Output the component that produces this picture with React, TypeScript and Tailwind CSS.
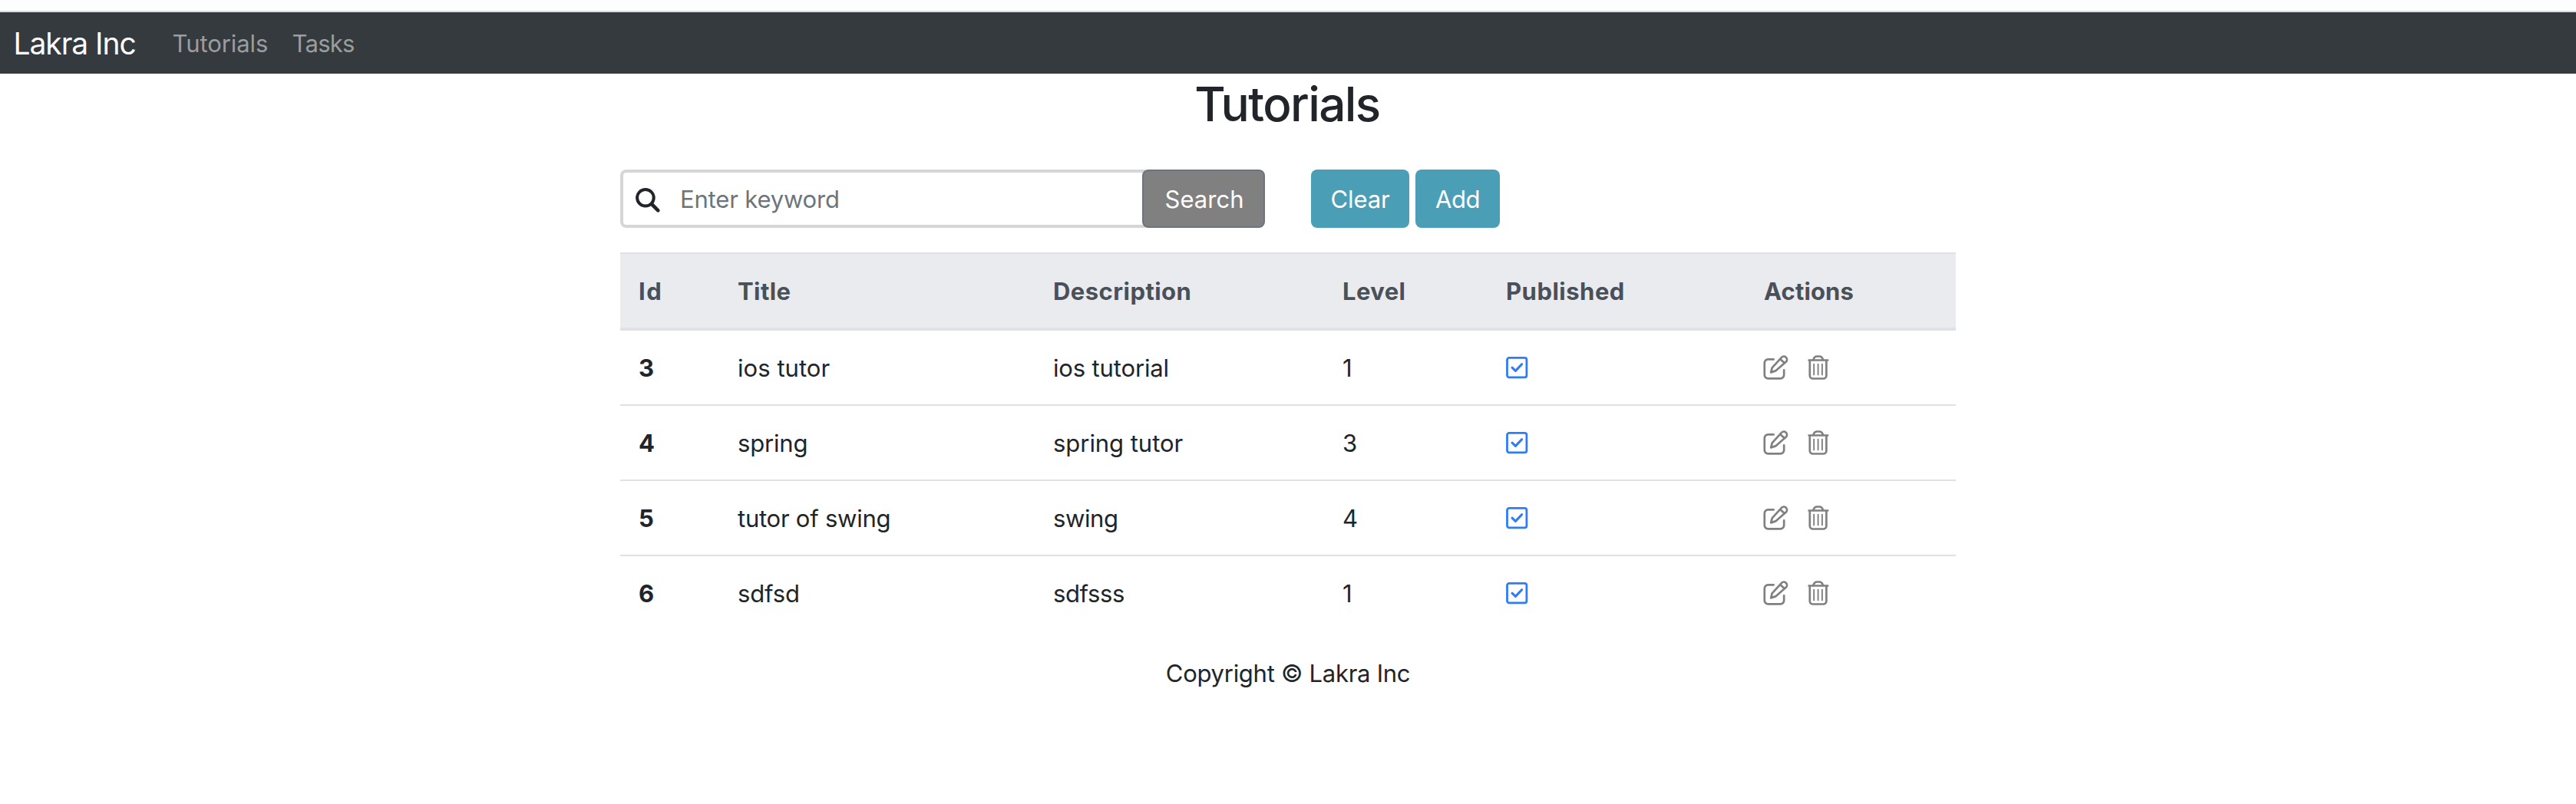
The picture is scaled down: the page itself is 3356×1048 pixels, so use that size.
type Row = {
  id: string;
  title: string;
  titleSpacing: string;
  description: string;
  descriptionSpacing: string;
  level: string;
};

const rows: Row[] = [
  { id: "3", title: "ios tutor", titleSpacing: "tracking-[0.05px]", description: "ios tutorial", descriptionSpacing: "tracking-[-0.15px]", level: "1" },
  { id: "4", title: "spring", titleSpacing: "tracking-[-0.16px]", description: "spring tutor", descriptionSpacing: "tracking-[-0.04px]", level: "3" },
  { id: "5", title: "tutor of swing", titleSpacing: "tracking-[-0.24px]", description: "swing", descriptionSpacing: "tracking-[-0.39px]", level: "4" },
  { id: "6", title: "sdfsd", titleSpacing: "tracking-[-0.12px]", description: "sdfsss", descriptionSpacing: "tracking-[-0.37px]", level: "1" },
];

const columns = [
  { label: "Id", className: "w-[129px] tracking-[1.6px]" },
  { label: "Title", className: "w-[411px] tracking-[0.4px]" },
  { label: "Description", className: "w-[377px] tracking-[0.45px]" },
  { label: "Level", className: "w-[213px] tracking-[0.39px]" },
  { label: "Published", className: "w-[336px] tracking-[0.5px]" },
  { label: "Actions", className: "w-[274px] tracking-[0.13px]" },
];

function SearchIcon() {
  return (
    <svg width="34" height="34" viewBox="0 0 34 34" fill="none" stroke="#212529" strokeLinecap="round" className="mt-1 ml-[15px] shrink-0">
      <circle cx="13.9" cy="13.7" r="10.8" strokeWidth="4" />
      <path d="M22 22l8.3 8.3" strokeWidth="4.6" />
    </svg>
  );
}

function CheckIcon() {
  return (
    <svg width="28" height="28" viewBox="0 0 28 28" fill="none" stroke="#2f7df6" strokeWidth="2.8" strokeLinecap="round" strokeLinejoin="round" className="-mt-px block overflow-visible">
      <rect x="1.5" y="1.4" width="25.4" height="25.4" rx="2.6" />
      <path d="M8 14.2l4.4 4.2 8.2-8.7" strokeWidth="3.1" />
    </svg>
  );
}

function EditIcon() {
  return (
    <svg width="32" height="32" viewBox="0 0 32 32" fill="none" stroke="#808080" strokeWidth="2.7" strokeLinecap="round" strokeLinejoin="round" className="block overflow-visible">
      <path d="M12.6 5.4H5.4A4.6 4.6 0 0 0 .8 10v15.8a4.6 4.6 0 0 0 4.6 4.6h16.2a4.6 4.6 0 0 0 4.6-4.6v-6.4" />
      <path d="M9.2 22.4l1.5-6L23 2.9a4 4 0 0 1 5.9 5.6L15.2 20.4z" />
      <path d="M21.4 5.2l5.3 4.9" />
    </svg>
  );
}

function TrashIcon() {
  return (
    <svg width="28" height="32" viewBox="0 0 28 32" fill="none" stroke="#808080" strokeWidth="2.7" strokeLinecap="round" strokeLinejoin="round" className="block overflow-visible">
      <path d="M1.6 6.5h24.6M2.8 6.5v20a4 4 0 0 0 4 4h13.6a4 4 0 0 0 4-4v-20" />
      <path d="M7.4 6l.8-1.9a4 4 0 0 1 3.7-2.6h3.6a4 4 0 0 1 3.7 2.6l.8 1.9" />
      <path d="M8.2 11.6v13.8M13.6 11.6v13.8M18.9 11.6v13.8" strokeWidth="1.9" />
    </svg>
  );
}

export default function App() {
  return (
    <div className="h-[1048px] overflow-hidden bg-white font-['Inter',sans-serif] text-[31px] text-[#212529]">
      <div className="h-4 border-b-2 border-[#d9dce0] bg-[#fcfdfe]" />

      <nav className="flex h-20 overflow-hidden bg-[#353a3e] pl-[17.5px] leading-[81px] whitespace-nowrap">
        <a className="w-[207px] text-[39px] tracking-[-1.05px] text-white">Lakra Inc</a>
        <a className="w-[156px] tracking-[-0.07px] text-[#9a9d9f]">Tutorials</a>
        <a className="tracking-[-0.76px] text-[#9a9d9f]">Tasks</a>
      </nav>

      <main className="mx-auto w-[1740px]">
        <h2 className="mt-0.5 pr-0.5 text-center text-[62px] leading-[75px] font-medium tracking-[-1.6px]">Tutorials</h2>

        <div className="mt-12 flex h-[76px] leading-[77px]">
          <div className="flex h-[76px] w-[684px] items-center rounded-l-lg border-4 border-r-0 border-[#d7d5d5]">
            <SearchIcon />
            <input
              placeholder="Enter keyword"
              className="ml-[25px] h-[68px] min-w-0 flex-1 bg-transparent pt-px tracking-[-0.17px] outline-none placeholder:text-[#6c757d]"
            />
          </div>
          <button className="relative -ml-1 h-[76px] w-40 overflow-hidden rounded-lg border-2 border-[#6c757d] bg-[#808080] text-white">
            <span className="block pl-0.5 leading-[73px] tracking-[0.03px]">Search</span>
          </button>
          <button className="ml-[60px] h-[76px] w-32 overflow-hidden rounded-lg bg-[#4a9fb6] text-white">
            <span className="block leading-[77px] tracking-[-0.13px]">Clear</span>
          </button>
          <button className="ml-2 h-[76px] w-[110px] overflow-hidden rounded-lg bg-[#4a9fb6] text-white">
            <span className="block leading-[77px] tracking-[-0.43px]">Add</span>
          </button>
        </div>

        <table className="mt-8 w-full table-fixed border-separate border-spacing-0 text-left leading-[49px]">
          <thead className="bg-[#e9ebef] text-[#495057]">
            <tr>
              {columns.map((c) => (
                <th key={c.label} className={`border-t-2 border-b-4 border-[#dee2e6] px-6 pt-6 pb-[23px] font-bold ${c.className}`}>
                  {c.label}
                </th>
              ))}
            </tr>
          </thead>
          <tbody className="[&>tr:not(:last-child)>*]:border-b-2 [&>tr>*]:border-[#dee2e6] [&>tr>*]:px-6 [&>tr>*]:pt-6 [&>tr>*]:pb-[23px]">
            {rows.map((r) => (
              <tr key={r.id}>
                <th className="font-bold">{r.id}</th>
                <td className={r.titleSpacing}>{r.title}</td>
                <td className={r.descriptionSpacing}>{r.description}</td>
                <td>{r.level}</td>
                <td>
                  <CheckIcon />
                </td>
                <td>
                  <div className="-mt-px flex items-center gap-[25px]">
                    <EditIcon />
                    <TrashIcon />
                  </div>
                </td>
              </tr>
            ))}
          </tbody>
        </table>

        <footer className="mt-8 text-center leading-[49px] tracking-[-0.27px]">Copyright © Lakra Inc</footer>
      </main>
    </div>
  );
}
